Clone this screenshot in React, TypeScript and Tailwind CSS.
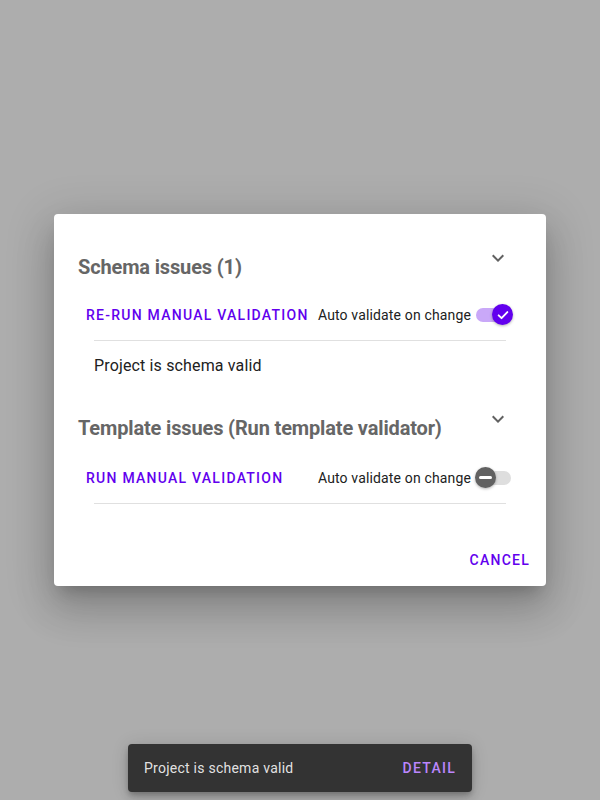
import React, { useState } from 'react';

const font = { fontFamily: 'Roboto, "Liberation Sans", sans-serif' };

function Chevron() {
  return (
    <button className="w-[48px] h-[48px] flex items-center justify-center -mt-[17px] text-[#616161]">
      <svg width="24" height="24" viewBox="0 0 24 24" fill="currentColor">
        <path d="M16.59 8.59 12 13.17 7.41 8.59 6 10l6 6 6-6z" />
      </svg>
    </button>
  );
}

function Toggle({ on }: { on: boolean }) {
  return (
    <span className="relative w-[46px] h-[38px] flex items-center shrink-0">
      <span className={`w-[35px] h-[14px] rounded-full ${on ? 'bg-[#c9a8f8]' : 'bg-[#dedede]'}`} />
      <span
        className={`absolute top-[8px] w-[21px] h-[21px] rounded-full flex items-center justify-center shadow-[0_1px_3px_rgba(0,0,0,0.3)] ${
          on ? 'left-[16px] bg-[#6200ee]' : 'left-[-1px] bg-[#616161]'
        }`}
      >
        {on ? (
          <svg width="14" height="14" viewBox="0 0 24 24" fill="none" stroke="white" strokeWidth="3.2" strokeLinecap="round" strokeLinejoin="round">
            <path d="M4.5 12.5 9.5 17.5 19.5 7" />
          </svg>
        ) : (
          <span className="w-[13px] h-[3px] bg-white rounded-full" />
        )}
      </span>
    </span>
  );
}

function Section({
  title,
  action,
  on,
  gap,
  children,
}: {
  title: string;
  action: string;
  on: boolean;
  gap: string;
  children?: React.ReactNode;
}) {
  return (
    <div>
      <div className="flex items-start justify-between">
        <h2 className="text-[20px] leading-[32px] font-bold tracking-[-0.15px] text-[#666666]">{title}</h2>
        <Chevron />
      </div>
      <div className={`flex items-center justify-between ${gap}`}>
        <button className="px-[8px] h-[36px] text-[14px] font-medium uppercase tracking-[1.25px] text-[#6200ee]">
          {action}
        </button>
        <label className="flex items-center text-[14px] text-[#212121] tracking-[0.15px]">
          <span className="mr-[5px]">Auto validate on change</span>
          <Toggle on={on} />
        </label>
      </div>
      <div className="mx-[16px] mt-[6px] h-px bg-[#e0e0e0]" />
      {children}
    </div>
  );
}

export default function App() {
  const [open] = useState(true);

  return (
    <div className="w-[600px] h-[800px] bg-[#adadad] flex items-center justify-center relative" style={font}>
      {open && (
        <div className="w-[492px] bg-white rounded-[4px] shadow-[0_11px_15px_-7px_rgba(0,0,0,0.2),0_24px_38px_3px_rgba(0,0,0,0.14),0_9px_46px_8px_rgba(0,0,0,0.12)]">
          <div className="px-[24px] pt-[37px]">
            <Section title="Schema issues (1)" action="Re-run manual validation" on gap="mt-[13px]">
              <p className="px-[16px] mt-[13px] text-[16px] leading-[24px] text-[#212121] tracking-[0.15px]">
                Project is schema valid
              </p>
            </Section>
            <div className="mt-[34px]">
              <Section
                title="Template issues (Run template validator)"
                action="Run manual validation"
                on={false}
                gap="mt-[15px]"
              />
            </div>
          </div>
          <div className="flex justify-end px-[8px] pt-[38px] pb-[8px]">
            <button className="px-[8px] h-[36px] text-[14px] font-medium uppercase tracking-[1.25px] text-[#6200ee]">
              Cancel
            </button>
          </div>
        </div>
      )}

      <div className="absolute bottom-[8px] left-[128px] w-[344px] h-[48px] bg-[#333333] rounded-[4px] flex items-center justify-between pl-[16px] pr-[8px] shadow-[0_3px_5px_-1px_rgba(0,0,0,0.2),0_6px_10px_0_rgba(0,0,0,0.14),0_1px_18px_0_rgba(0,0,0,0.12)]">
        <span className="text-[14px] text-white/[0.87] tracking-[0.25px]">Project is schema valid</span>
        <button className="px-[8px] h-[36px] text-[14px] font-medium uppercase tracking-[1.25px] text-[#bb86fc]">
          Detail
        </button>
      </div>
    </div>
  );
}
